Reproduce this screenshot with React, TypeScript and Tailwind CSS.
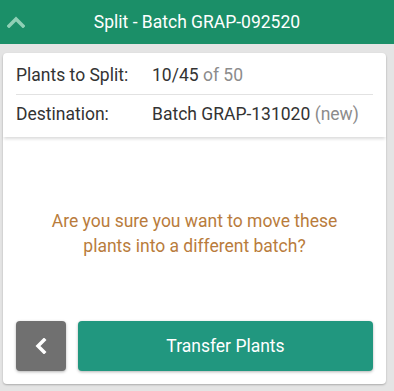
import React from 'react';

const Row: React.FC<{ label: string; value: string; muted: string; divider?: boolean }> = ({ label, value, muted, divider }) => (
  <div className={`flex items-center h-[38px] ${divider ? 'border-b border-[#e2e2e2]' : ''}`}>
    <span className="w-[136px] text-[#333]">{label}</span>
    <span className="text-[#333]">
      {value} <span className="text-[#8c8c8c]">{muted}</span>
    </span>
  </div>
);

export default function App() {
  return (
    <div className="w-[394px] h-[391px] bg-[#e4e4e4] flex flex-col font-['Roboto',sans-serif] overflow-hidden">
      <header className="h-[44px] bg-[#1b8f68] flex items-center relative shrink-0">
        <svg className="absolute left-[7px] top-[16px] w-[18px] h-[12px]" viewBox="0 0 18 12" fill="none">
          <path d="M2 10L9 3l7 7" stroke="#8fd0b5" strokeWidth={3.5} strokeLinecap="square" />
        </svg>
        <h1 className="w-full text-center text-white text-[17.5px]">Split - Batch GRAP-092520</h1>
      </header>

      <div className="mt-[9px] mx-[3px] w-[383px] h-[331px] bg-white rounded-[4px] shadow-[0_1px_2px_rgba(0,0,0,0.25)] flex flex-col">
        <div className="px-[13px] pt-[4px] pb-[4px] shadow-[0_3px_3px_-1px_rgba(0,0,0,0.14)] text-[17.5px]">
          <Row label="Plants to Split:" value="10/45" muted="of 50" divider />
          <Row label="Destination:" value="Batch GRAP-131020" muted="(new)" />
        </div>

        <div className="flex-1 flex items-center justify-center pt-[10px]">
          <p className="text-center text-[#b97c3c] text-[17.5px] leading-[25px]">
            Are you sure you want to move these
            <br />
            plants into a different batch?
          </p>
        </div>

        <div className="flex gap-[12px] px-[13px] pb-[13px]">
          <button className="w-[50px] h-[50px] rounded-[4px] bg-[#707070] flex items-center justify-center shadow-[0_1px_3px_rgba(0,0,0,0.3)]">
            <svg className="w-[12px] h-[16px]" viewBox="0 0 12 16" fill="none">
              <path d="M9 2L3 8l6 6" stroke="#fff" strokeWidth={3.5} strokeLinecap="square" />
            </svg>
          </button>
          <button className="flex-1 h-[50px] rounded-[4px] bg-[#21977f] text-white text-[17.5px] shadow-[0_1px_3px_rgba(0,0,0,0.3)]">
            Transfer Plants
          </button>
        </div>
      </div>
    </div>
  );
}
